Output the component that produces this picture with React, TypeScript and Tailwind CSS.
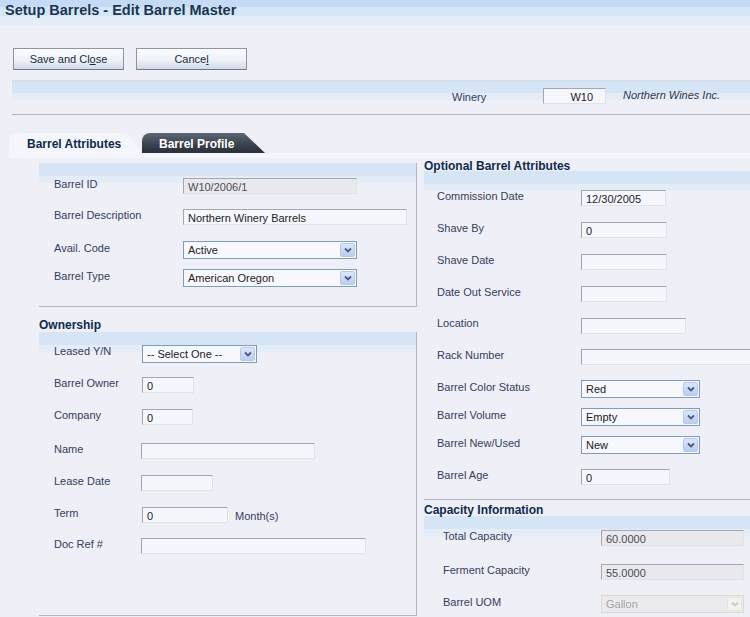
import React from 'react';

function Label({ children, w }: { children: React.ReactNode; w: string }) {
  return <div className={`${w} shrink-0 pb-[4px] text-[#34405e]`}>{children}</div>;
}

function TextBox({ w, value = '', disabled = false, right = false }: { w: string; value?: string; disabled?: boolean; right?: boolean }) {
  return (
    <div
      className={`${w} h-[16px] shrink-0 border border-t-[#a3a7b0] border-l-[#a3a7b0] border-r-[#dfe2e9] border-b-[#dfe2e9] px-[4px] leading-[16px] whitespace-nowrap overflow-hidden ${
        disabled ? 'bg-[#e8e8ed] border-r-[#c4c7ce] border-b-[#c4c7ce] text-[#4d4d55]' : 'bg-[#f6f7fd] text-[#222]'
      } ${right ? 'text-right pr-[12px]' : ''}`}
    >
      {value}
    </div>
  );
}

function Arrow({ disabled = false }: { disabled?: boolean }) {
  return (
    <div
      className={`w-[15px] h-[14px] rounded-[2px] flex items-center justify-center border ${
        disabled
          ? 'border-[#e4e4dc] bg-[#f2f2ee]'
          : 'border-[#b7c8ea] bg-[linear-gradient(to_bottom,#dbe6fb,#bccdf1)]'
      }`}
    >
      <svg width="8" height="6" viewBox="0 0 8 6">
        <polyline points="1,1.5 4,4.5 7,1.5" fill="none" stroke={disabled ? '#c8c8c0' : '#4b5b80'} strokeWidth="1.8" />
      </svg>
    </div>
  );
}

function Select({ w, value, disabled = false }: { w: string; value: string; disabled?: boolean }) {
  return (
    <div
      className={`${w} h-[18px] shrink-0 flex items-center justify-between border pl-[4px] pr-[1px] ${
        disabled ? 'border-[#dcdcc4] bg-[#ebebef] text-[#a3a3a3]' : 'border-[#7f9db9] bg-[#f7f8fe] text-[#222]'
      }`}
    >
      <span className="pt-[1px]">{value}</span>
      <Arrow disabled={disabled} />
    </div>
  );
}

function Row({ h, children }: { h: string; children: React.ReactNode }) {
  return <div className={`flex items-center ${h}`}>{children}</div>;
}

const band =
  'bg-[linear-gradient(to_bottom,#d6e5f5_0,#d6e5f5_13px,#e4ecf7_13px,#e4ecf7_20px,transparent_20px)]';

export default function App() {
  return (
    <div className="w-[750px] h-[617px] overflow-hidden bg-[#eeeff7] font-['Liberation_Sans',Arial,sans-serif] text-[11px]">
      {/* title */}
      <div className="h-[25px] bg-[linear-gradient(to_bottom,#c5dbf5_0,#c5dbf5_7px,#d5e6f7_7px,#d5e6f7_16px,#e4eef8_16px)] pl-[5px] pt-[1px]">
        <h1 className="text-[14.5px] font-bold leading-[18px] text-[#1a3452]">Setup Barrels - Edit Barrel Master</h1>
      </div>

      {/* buttons */}
      <div className="flex gap-[12px] pl-[13px] pt-[23px]">
        <button className="w-[111px] h-[22px] border border-[#8a95a5] border-b-[#6f7b8c] bg-[linear-gradient(to_bottom,#fbfcfe,#eef2f8_55%,#d2dae6)] text-[#1c2c48]">
          Save and Cl<span className="underline">o</span>se
        </button>
        <button className="w-[111px] h-[22px] border border-[#8a95a5] border-b-[#6f7b8c] bg-[linear-gradient(to_bottom,#fbfcfe,#eef2f8_55%,#d2dae6)] text-[#1c2c48]">
          Cance<span className="underline">l</span>
        </button>
      </div>

      {/* winery band */}
      <div className="mt-[10px] ml-[12px] h-[26px] flex items-start bg-[linear-gradient(to_bottom,#d3dfec_0,#d3dfec_2px,#d5e5f5_2px,#d5e5f5_13px,#e4edf7_13px,#e4edf7_20px,transparent_20px)]">
        <div className="ml-[440px] w-[91px] pt-[9px] text-[#34405e]">Winery</div>
        <div className="mt-[8px]">
          <TextBox w="w-[63px]" value="W10" right />
        </div>
        <div className="ml-[17px] pt-[7px] italic text-[#2f3548]">Northern Wines Inc.</div>
      </div>

      <div className="mt-[8px] ml-[12px] border-t border-[#b3b5bb]" />

      {/* tabs */}
      <div className="mt-[18px] ml-[9px]">
        <div className="flex h-[20px]">
          <div className="w-[133px] rounded-tl-[8px] bg-[#f5f6fc] [clip-path:polygon(0_0,118px_0,100%_100%,0_100%)] pl-[18px] pt-[2px] text-[12px] font-bold text-[#0f2b4c]">
            Barrel Attributes
          </div>
          <div className="w-[123px] rounded-tl-[8px] bg-[linear-gradient(to_bottom,#5e6674,#3a414d_60%,#2a303a)] [clip-path:polygon(0_0,102px_0,100%_100%,0_100%)] pl-[17px] pt-[2px] text-[12px] font-bold text-white">
            Barrel Profile
          </div>
        </div>
        <div className="h-[5px] bg-[#f5f6fc]" />
      </div>

      {/* body */}
      <div className="flex">
        {/* left column */}
        <div className="w-[417px] shrink-0 pl-[39px] pt-[5px]">
          <div className={`border-r border-b border-[#b5b7bf] pl-[15px] pt-[8px] pb-[17px] ${band}`}>
            <Row h="h-[30px]">
              <Label w="w-[129px]">Barrel ID</Label>
              <TextBox w="w-[174px]" value="W10/2006/1" disabled />
            </Row>
            <Row h="h-[32px]">
              <Label w="w-[129px]">Barrel Description</Label>
              <TextBox w="w-[224px]" value="Northern Winery Barrels" />
            </Row>
            <Row h="h-[34px]">
              <Label w="w-[129px]">Avail. Code</Label>
              <Select w="w-[174px]" value="Active" />
            </Row>
            <Row h="h-[22px]">
              <Label w="w-[129px]">Barrel Type</Label>
              <Select w="w-[174px]" value="American Oregon" />
            </Row>
          </div>

          <div className="h-[25px] flex items-end">
            <h2 className="text-[12px] font-bold leading-[13px] text-[#0f2b4c]">Ownership</h2>
          </div>
          <div className={`border-r border-b border-[#b5b7bf] pl-[15px] pt-[6px] pb-[56px] ${band}`}>
            <Row h="h-[31px]">
              <Label w="w-[88px]">Leased Y/N</Label>
              <Select w="w-[115px]" value="-- Select One --" />
            </Row>
            <Row h="h-[32px]">
              <Label w="w-[88px]">Barrel Owner</Label>
              <TextBox w="w-[52px]" value="0" />
            </Row>
            <Row h="h-[32px]">
              <Label w="w-[88px]">Company</Label>
              <TextBox w="w-[51px]" value="0" />
            </Row>
            <Row h="h-[36px]">
              <Label w="w-[87px]">Name</Label>
              <TextBox w="w-[174px]" />
            </Row>
            <Row h="h-[28px]">
              <Label w="w-[87px]">Lease Date</Label>
              <TextBox w="w-[72px]" />
            </Row>
            <Row h="h-[36px]">
              <Label w="w-[88px]">Term</Label>
              <TextBox w="w-[86px]" value="0" />
              <span className="ml-[7px] pt-[2px] text-[#34405e]">Month(s)</span>
            </Row>
            <Row h="h-[26px]">
              <Label w="w-[87px]">Doc Ref #</Label>
              <TextBox w="w-[225px]" />
            </Row>
          </div>
        </div>

        {/* right column */}
        <div className="flex-1 pl-[7px] min-w-0">
          <div className="h-[13px]">
            <h2 className="pt-[2px] text-[12px] font-bold leading-[13px] text-[#0f2b4c] whitespace-nowrap">Optional Barrel Attributes</h2>
          </div>
          <div className={`border-b border-[#b5b7bf] pl-[13px] pt-[11px] pb-[6px] ${band}`}>
            <Row h="h-[32px]">
              <Label w="w-[144px]">Commission Date</Label>
              <TextBox w="w-[85px]" value="12/30/2005" />
            </Row>
            <Row h="h-[32px]">
              <Label w="w-[144px]">Shave By</Label>
              <TextBox w="w-[86px]" value="0" />
            </Row>
            <Row h="h-[32px]">
              <Label w="w-[144px]">Shave Date</Label>
              <TextBox w="w-[86px]" />
            </Row>
            <Row h="h-[32px]">
              <Label w="w-[144px]">Date Out Service</Label>
              <TextBox w="w-[86px]" />
            </Row>
            <Row h="h-[31px]">
              <Label w="w-[144px]">Location</Label>
              <TextBox w="w-[105px]" />
            </Row>
            <Row h="h-[32px]">
              <Label w="w-[144px]">Rack Number</Label>
              <TextBox w="w-[190px]" />
            </Row>
            <Row h="h-[32px]">
              <Label w="w-[144px]">Barrel Color Status</Label>
              <Select w="w-[119px]" value="Red" />
            </Row>
            <Row h="h-[24px]">
              <Label w="w-[144px]">Barrel Volume</Label>
              <Select w="w-[119px]" value="Empty" />
            </Row>
            <Row h="h-[32px]">
              <Label w="w-[144px]">Barrel New/Used</Label>
              <Select w="w-[119px]" value="New" />
            </Row>
            <Row h="h-[32px]">
              <Label w="w-[144px]">Barrel Age</Label>
              <TextBox w="w-[89px]" value="0" />
            </Row>
          </div>

          <div className="h-[16px] flex items-end">
            <h2 className="text-[12px] font-bold leading-[12px] text-[#0f2b4c]">Capacity Information</h2>
          </div>
          <div className={`pl-[19px] pt-[6px] ${band}`}>
            <Row h="h-[32px]">
              <Label w="w-[158px]">Total Capacity</Label>
              <TextBox w="w-[143px]" value="60.0000" disabled />
            </Row>
            <Row h="h-[36px]">
              <Label w="w-[158px]">Ferment Capacity</Label>
              <TextBox w="w-[143px]" value="55.0000" disabled />
            </Row>
            <Row h="h-[28px]">
              <Label w="w-[158px]">Barrel UOM</Label>
              <Select w="w-[143px]" value="Gallon" disabled />
            </Row>
          </div>
        </div>
      </div>
    </div>
  );
}
